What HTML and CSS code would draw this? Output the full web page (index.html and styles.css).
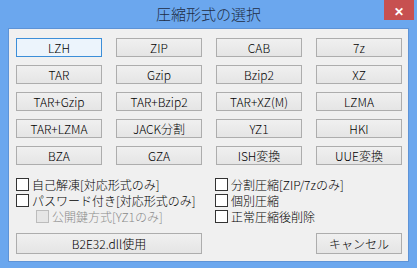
FILE: index.html
```html
<!DOCTYPE html>
<html lang="ja">
<head>
    <meta charset="UTF-8">
    <meta name="viewport" content="width=device-width, initial-scale=1.0">
    <title>圧縮形式の選択</title>
    <link rel="stylesheet" href="styles.css">
</head>
<body>

<div class="window">
    <div class="titlebar">
        <span class="title">圧縮形式の選択</span>
        <span class="close">✕</span>
    </div>

    <div class="client">
        <!-- 圧縮形式ボタン -->
        <div class="formats">
            <button class="btn default">LZH</button>
            <button class="btn">ZIP</button>
            <button class="btn">CAB</button>
            <button class="btn">7z</button>
            <button class="btn">TAR</button>
            <button class="btn">Gzip</button>
            <button class="btn">Bzip2</button>
            <button class="btn">XZ</button>
            <button class="btn">TAR+Gzip</button>
            <button class="btn">TAR+Bzip2</button>
            <button class="btn">TAR+XZ(M)</button>
            <button class="btn">LZMA</button>
            <button class="btn">TAR+LZMA</button>
            <button class="btn">JACK分割</button>
            <button class="btn">YZ1</button>
            <button class="btn">HKI</button>
            <button class="btn">BZA</button>
            <button class="btn">GZA</button>
            <button class="btn">ISH変換</button>
            <button class="btn">UUE変換</button>
        </div>

        <!-- オプション -->
        <div class="options">
            <div class="col">
                <label class="check"><span class="box"></span>自己解凍[対応形式のみ]</label>
                <label class="check"><span class="box"></span>パスワード付き[対応形式のみ]</label>
                <label class="check sub disabled"><span class="box"></span>公開鍵方式[YZ1のみ]</label>
            </div>
            <div class="col">
                <label class="check"><span class="box"></span>分割圧縮[ZIP/7zのみ]</label>
                <label class="check"><span class="box"></span>個別圧縮</label>
                <label class="check"><span class="box"></span>正常圧縮後削除</label>
            </div>
        </div>

        <div class="actions">
            <button class="btn wide">B2E32.dll使用</button>
            <button class="btn">キャンセル</button>
        </div>
    </div>
</div>

</body>
</html>
```

FILE: styles.css
```css
body {
    margin: 0;
    width: 417px;
    height: 268px;
    overflow: hidden;
    font-family: "Noto Sans CJK JP", sans-serif;
    font-size: 12px;
    font-weight: 300;
    color: #000;
}
.window {
    width: 417px;
    height: 268px;
    box-sizing: border-box;
    background: #6ba7ee;
    padding: 0 8px 6px 8px;
    display: flex;
    flex-direction: column;
}
.titlebar {
    position: relative;
    height: 28px;
    display: flex;
    justify-content: center;
    align-items: center;
}
.title {
    font-size: 15px;
    font-weight: 300;
    color: #1e2d45;
    margin-top: -2px;
}
.close {
    position: absolute;
    right: -5px;
    top: 0;
    width: 30px;
    height: 20px;
    background: #c75050;
    color: #fff;
    font-size: 12px;
    font-weight: bold;
    display: flex;
    justify-content: center;
    align-items: center;
}
.client {
    flex: 1;
    background: #f0f0f0;
    border: 1px solid #5e93d6;
    padding: 9px 6px 0 7px;
}
.btn {
    height: 19px;
    padding: 0;
    font-family: inherit;
    font-size: 12px;
    font-weight: 300;
    color: #000;
    background: linear-gradient(#f0f0f0, #e5e5e5);
    border: 1px solid #adadad;
    line-height: 17px;
}
.btn.default {
    border-color: #3c8ed8;
    background: #ecf4fc;
}
.formats {
    display: grid;
    grid-template-columns: repeat(4, 86px);
    column-gap: 14px;
    row-gap: 8px;
}
.options {
    display: grid;
    grid-template-columns: 199px 1fr;
    margin-top: 11px;
}
.col {
    display: flex;
    flex-direction: column;
}
.check {
    height: 16px;
    display: flex;
    align-items: center;
    gap: 3px;
    white-space: nowrap;
}
.box {
    width: 11px;
    height: 11px;
    background: #fff;
    border: 1px solid #333;
}
.check.sub {
    padding-left: 20px;
}
.check.disabled {
    color: #8a8a8a;
}
.check.disabled .box {
    background: #e6e6e6;
    border-color: #bcbcbc;
}
.actions {
    display: grid;
    grid-template-columns: 186px 86px;
    justify-content: space-between;
    margin-top: 9px;
}
.actions .btn {
    height: 21px;
}
```
